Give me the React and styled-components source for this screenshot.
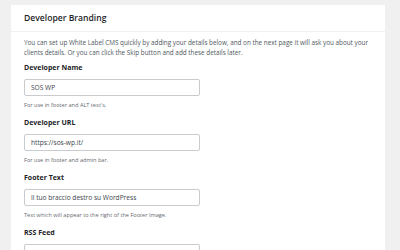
import React from 'react';
import styled, { createGlobalStyle } from 'styled-components';

const Global = createGlobalStyle`
  html, body {
    margin: 0;
    padding: 0;
    background: #f0f0f1;
    font-family: 'Open Sans', 'Noto Sans', sans-serif;
    overflow: hidden;
  }
`;

const Page = styled.div`
  width: 400px;
  height: 250px;
  padding: 5px 15px 0 11px;
  box-sizing: border-box;
`;

const Card = styled.div`
  background: #fff;
  height: 300px;
`;

const CardHeader = styled.div`
  height: 26px;
  padding: 0 13px;
  display: flex;
  align-items: center;
  border-bottom: 1px solid #f0f0f1;
  font-size: 8.6px;
  font-weight: 600;
  color: #1d2327;
`;

const CardBody = styled.div`
  padding: 6px 13px 0;
`;

const Intro = styled.p`
  margin: 0 0 5px;
  font-size: 6.35px;
  line-height: 10px;
  color: #50575e;
`;

const Field = styled.div`
  display: flex;
  flex-direction: column;
  height: 55px;
`;

const Label = styled.label`
  font-size: 7px;
  font-weight: 700;
  color: #1d2327;
  line-height: 10px;
  margin-bottom: 6px;
`;

const Input = styled.input`
  width: 176px;
  height: 17px;
  box-sizing: border-box;
  border: 1px solid #c9cbcf;
  border-radius: 2px;
  padding: 0 6px;
  font-family: inherit;
  font-size: 6.6px;
  color: #3c434a;
  outline: none;
`;

const Hint = styled.span`
  margin-top: 5px;
  font-size: 5.6px;
  color: #646970;
  line-height: 8px;
`;

const fields = [
  { label: 'Developer Name', value: 'SOS WP', hint: "For use in footer and ALT text's." },
  { label: 'Developer URL', value: 'https://sos-wp.it/', hint: 'For use in footer and admin bar.' },
  { label: 'Footer Text', value: 'Il tuo braccio destro su WordPress', hint: 'Text which will appear to the right of the Footer Image.' },
  { label: 'RSS Feed', value: 'https://sos-wp.it/feed/', hint: '' },
];

export default function App() {
  return (
    <>
      <Global />
      <Page>
        <Card>
          <CardHeader>Developer Branding</CardHeader>
          <CardBody>
            <Intro>
              You can set up White Label CMS quickly by adding your details below, and on the next page it will ask you about your
              clients details. Or you can click the Skip button and add these details later.
            </Intro>
            {fields.map((f) => (
              <Field key={f.label}>
                <Label>{f.label}</Label>
                <Input defaultValue={f.value} readOnly />
                {f.hint && <Hint>{f.hint}</Hint>}
              </Field>
            ))}
          </CardBody>
        </Card>
      </Page>
    </>
  );
}
